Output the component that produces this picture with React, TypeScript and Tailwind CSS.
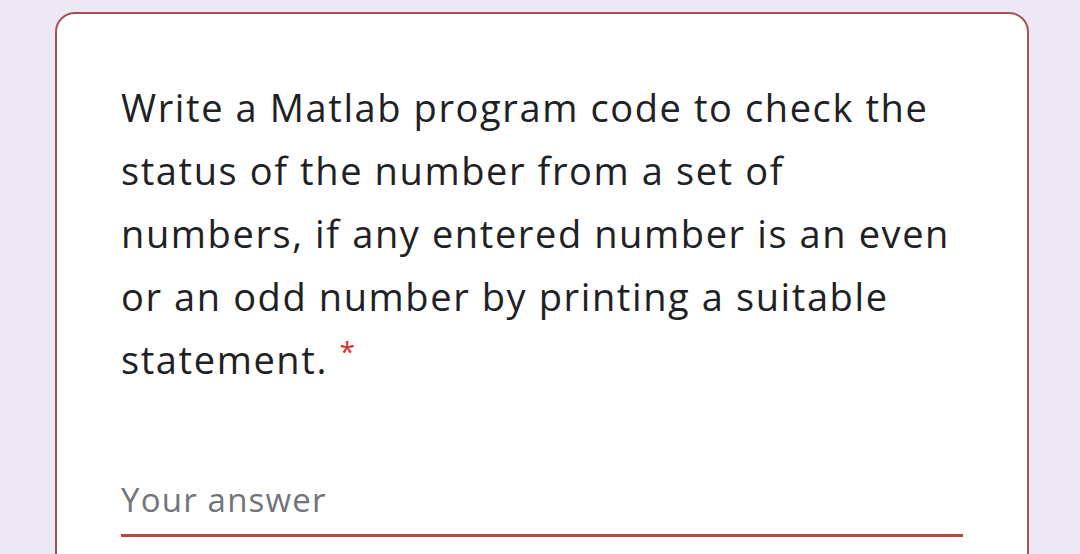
export default function App() {
  return (
    <div className="w-[1080px] h-[554px] overflow-hidden bg-[#ece8f6] pt-[12px] pl-[55px]" style={{ fontFamily: "'Open Sans', 'Noto Sans', sans-serif" }}>
      <div className="w-[974px] h-[600px] bg-white border-2 border-[#a5514f] rounded-[20px] pt-[62px] px-[64px]">
        <p className="text-[38px] leading-[63px] tracking-[1.6px] text-[#202124] whitespace-nowrap">
          Write a Matlab program code to check the<br />
          status of the number from a set of<br />
          numbers, if any entered number is an even<br />
          or an odd number by printing a suitable<br />
          statement. <span className="text-[#d93025] text-[28px] align-top leading-[46px]">*</span>
        </p>
        <div className="mt-[89px] text-[33px] leading-[40px] tracking-[1.2px] text-[#70757a]">Your answer</div>
        <div className="mt-[14px] h-[3px] bg-[#b5493f]" />
      </div>
    </div>
  );
}
